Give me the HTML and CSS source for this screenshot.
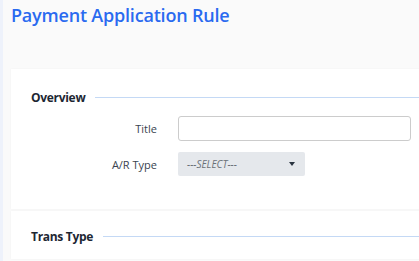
FILE: index.html
```html
<!DOCTYPE html>
<html lang="en">
  <head>
    <meta charset="UTF-8" />
    <title>Payment Application Rule</title>
    <link rel="stylesheet" href="styles.css">
  </head>
  <body>
    <div class="page">
      <h1 class="page-title">Payment Application Rule</h1>

      <div class="card card-main">
        <div class="section-head">
          <span>Overview</span>
          <div class="section-line"></div>
        </div>
        <div class="form-row">
          <label class="form-label">Title</label>
          <input type="text" class="text-input" />
        </div>
        <div class="form-row">
          <label class="form-label">A/R Type</label>
          <div class="select-box">
            <span class="select-text">---SELECT---</span>
            <span class="select-arrow"></span>
          </div>
        </div>
      </div>

      <div class="card card-next">
        <div class="section-head">
          <span>Trans Type</span>
          <div class="section-line"></div>
        </div>
      </div>
    </div>
  </body>
</html>
```

FILE: styles.css
```css
* {
  box-sizing: border-box;
  margin: 0;
  padding: 0;
}

body {
  font-family: "Open Sans", "Noto Sans", Arial, sans-serif;
  background-color: #fafafa;
  border-left: 3px solid #eef2fb;
  height: 100vh;
  overflow: hidden;
}

.page {
  padding: 3px 0 0 8px;
}

.page-title {
  font-size: 18px;
  font-weight: 600;
  color: #2a6af0;
  letter-spacing: -0.2px;
  height: 66px;
}

.card {
  background-color: #fff;
  margin-right: -10px;
  margin-bottom: 2px;
  padding: 20px 0 0 20px;
  box-shadow: 0 0 2px rgba(0, 0, 0, 0.04);
}

.card-main {
  height: 140px;
}

.card-next {
  padding-top: 17px;
  height: 48px;
  margin-bottom: 0;
}

.section-head {
  display: flex;
  align-items: center;
  gap: 10px;
  font-size: 12px;
  font-weight: 700;
  letter-spacing: -0.3px;
  color: #1d2733;
  height: 16px;
  margin-bottom: 11px;
}

.section-line {
  flex: 1;
  height: 1px;
  background-color: #c4d9f5;
}

.form-row {
  display: flex;
  align-items: center;
  margin-bottom: 11px;
}

.form-label {
  width: 126px;
  text-align: right;
  font-size: 11px;
  color: #3a4450;
  margin-right: 21px;
}

.text-input {
  width: 233px;
  height: 25px;
  border: 1px solid #ccc;
  border-radius: 3px;
  background: #fff;
}

.select-box {
  width: 127px;
  height: 24px;
  background-color: #e5e8ec;
  border-radius: 2px;
  display: flex;
  align-items: center;
  justify-content: space-between;
  padding: 0 10px 0 9px;
}

.select-text {
  font-size: 10px;
  font-style: italic;
  color: #6b7178;
}

.select-arrow {
  width: 0;
  height: 0;
  border-left: 3px solid transparent;
  border-right: 3px solid transparent;
  border-top: 4px solid #2a3440;
}
```
